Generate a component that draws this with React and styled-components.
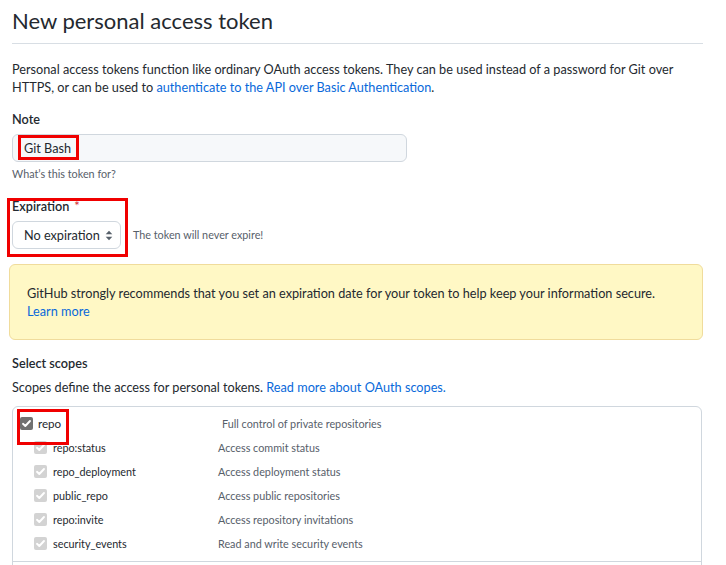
import React from "react";
import styled, { createGlobalStyle } from "styled-components";

const Global = createGlobalStyle`
  html, body { margin: 0; padding: 0; background: #ffffff; }
  body {
    font-family: "Segoe UI", Lato, "Open Sans", sans-serif;
    color: #24292f;
    font-size: 12.7px;
  }
  * { box-sizing: border-box; }
`;

const Page = styled.div`
  width: 726px;
  height: 565px;
  overflow: hidden;
  padding: 0 23px 0 12px;
`;

const Title = styled.h1`
  margin: 0;
  padding: 3px 0 4px;
  font-size: 22px;
  font-weight: 400;
  line-height: 36px;
  border-bottom: 1px solid #d8dee4;
  width: 691px;
`;

const Lead = styled.p`
  margin: 16px 0 0;
  line-height: 18px;
  font-size: 12.7px;
`;

const Link = styled.a`
  color: #0969da;
  text-decoration: none;
`;

const Label = styled.div`
  margin-top: 14px;
  font-weight: 600;
  font-size: 12.7px;
  line-height: 18px;
`;

const Required = styled.span`
  color: #cf222e;
  font-weight: 400;
  margin-left: 5px;
`;

const Annotated = styled.div`
  position: relative;
`;

const RedBox = styled.div`
  position: absolute;
  border: 3px solid #f00000;
  pointer-events: none;
  left: ${(p) => p.$l}px;
  top: ${(p) => p.$t}px;
  width: ${(p) => p.$w}px;
  height: ${(p) => p.$h}px;
`;

const TextInput = styled.div`
  margin-top: 6px;
  width: 395px;
  height: 28px;
  border: 1px solid #d0d7de;
  border-radius: 6px;
  background: #f6f8fa;
  display: flex;
  align-items: center;
  padding-left: 11px;
  font-size: 12.7px;
`;

const Hint = styled.div`
  margin-top: 3px;
  font-size: 10.8px;
  line-height: 18px;
  color: #57606a;
`;

const InlineHint = styled.span`
  font-size: 10.8px;
  line-height: 18px;
  color: #57606a;
`;

const SelectRow = styled.div`
  margin-top: 6px;
  display: flex;
  align-items: center;
  gap: 12px;
`;

const Select = styled.div`
  width: 109px;
  height: 28px;
  border: 1px solid #d0d7de;
  border-radius: 6px;
  background: #ffffff;
  display: flex;
  align-items: center;
  justify-content: space-between;
  padding: 0 7px 0 11px;
  font-size: 12.7px;
  white-space: nowrap;
  svg { flex: none; }
`;

const Flash = styled.div`
  margin: 15px 0 0 -3px;
  width: 694px;
  border: 1px solid #f0dc9c;
  background: #fff8c5;
  border-radius: 6px;
  padding: 19px 17px 19px;
  line-height: 18px;
  font-size: 12.7px;
`;

const SubHead = styled.div`
  margin-top: 14px;
  font-size: 12.7px;
  font-weight: 600;
  line-height: 18px;
`;

const Desc = styled.div`
  margin-top: 6px;
  font-size: 12.7px;
  line-height: 18px;
`;

const ScopeBox = styled.div`
  margin-top: 10px;
  width: 690px;
  height: 200px;
  border: 1px solid #d0d7de;
  border-radius: 6px;
  padding-top: 4px;
`;

const Group = styled.div`
  border-bottom: 1px solid #d0d7de;
  padding-bottom: 6px;
`;

const ScopeRow = styled.div`
  display: grid;
  grid-template-columns: ${(p) => (p.$child ? "184px 1fr" : "202px 1fr")};
  align-items: center;
  height: 24px;
  padding-left: ${(p) => (p.$child ? 21 : 7)}px;
`;

const ScopeName = styled.div`
  display: flex;
  align-items: center;
  gap: ${(p) => (p.$child ? 6 : 5)}px;
  font-size: ${(p) => (p.$child ? 10.8 : 11.6)}px;
  white-space: nowrap;
`;

const ScopeDesc = styled.div`
  font-size: 10.8px;
  color: #57606a;
  white-space: nowrap;
`;

const Box = styled.span`
  width: 13px;
  height: 13px;
  border-radius: 2px;
  background: ${(p) => (p.$light ? "#d3d3d3" : "#717171")};
  display: inline-flex;
  align-items: center;
  justify-content: center;
  flex: none;
`;

const Check = ({ light }) => (
  <Box $light={light}>
    <svg width="11" height="11" viewBox="0 0 11 11">
      <path d="M2 5.8 L4.3 8 L9 3" fill="none" stroke="#ffffff" strokeWidth="1.9" strokeLinecap="round" strokeLinejoin="round" />
    </svg>
  </Box>
);

const Arrows = () => (
  <svg width="8" height="11" viewBox="0 0 8 11">
    <path d="M4 0.8 L7.3 4.3 H0.7 Z" fill="#57606a" />
    <path d="M4 10.2 L7.3 6.7 H0.7 Z" fill="#57606a" />
  </svg>
);

const children = [
  ["repo:status", "Access commit status"],
  ["repo_deployment", "Access deployment status"],
  ["public_repo", "Access public repositories"],
  ["repo:invite", "Access repository invitations"],
  ["security_events", "Read and write security events"],
];

export default function App() {
  return (
    <>
      <Global />
      <Page>
        <Title>New personal access token</Title>
        <Lead>
          Personal access tokens function like ordinary OAuth access tokens. They can be used instead of a password for Git over HTTPS, or can be used to{" "}
          <Link>authenticate to the API over Basic Authentication</Link>.
        </Lead>

        <Label>Note</Label>
        <Annotated>
          <TextInput>Git Bash</TextInput>
          <RedBox $l={6} $t={1} $w={61} $h={25} />
        </Annotated>
        <Hint>What’s this token for?</Hint>

        <Annotated>
          <Label>
            Expiration<Required>*</Required>
          </Label>
          <SelectRow>
            <Select>
              No expiration <Arrows />
            </Select>
            <InlineHint>The token will never expire!</InlineHint>
          </SelectRow>
          <RedBox $l={-5} $t={1} $w={121} $h={59} />
        </Annotated>

        <Flash>
          GitHub strongly recommends that you set an expiration date for your token to help keep your information secure.
          <br />
          <Link>Learn more</Link>
        </Flash>

        <SubHead>Select scopes</SubHead>
        <Desc>
          Scopes define the access for personal tokens. <Link>Read more about OAuth scopes.</Link>
        </Desc>

        <ScopeBox>
          <Group>
            <Annotated>
              <ScopeRow>
                <ScopeName>
                  <Check />
                  repo
                </ScopeName>
                <ScopeDesc>Full control of private repositories</ScopeDesc>
              </ScopeRow>
              <RedBox $l={4} $t={-2} $w={52} $h={36} />
            </Annotated>
            {children.map(([n, d]) => (
              <ScopeRow key={n} $child>
                <ScopeName $child>
                  <Check light />
                  {n}
                </ScopeName>
                <ScopeDesc>{d}</ScopeDesc>
              </ScopeRow>
            ))}
          </Group>
        </ScopeBox>
      </Page>
    </>
  );
}
